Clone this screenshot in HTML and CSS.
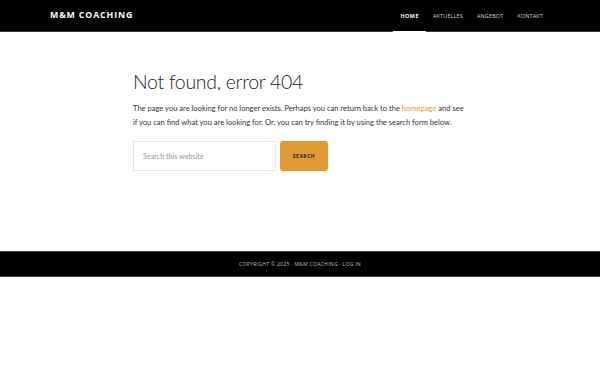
FILE: index.html
```html
<!DOCTYPE html>
<html lang="en">
<head>
<meta charset="utf-8">
<title>Not found, error 404 - M&amp;M Coaching</title>
<link rel="stylesheet" href="styles.css">
</head>
<body>
<header class="site-header">
  <div class="wrap header-wrap">
    <a class="logo" href="#">M&amp;M Coaching</a>
    <nav class="nav">
      <a class="nav-item active" href="#">Home</a>
      <a class="nav-item" href="#">Aktuelles</a>
      <a class="nav-item" href="#">Angebot</a>
      <a class="nav-item" href="#">Kontakt</a>
    </nav>
  </div>
</header>
<main class="content">
  <h1 class="title">Not found, error 404</h1>
  <p class="text">The page you are looking for no longer exists. Perhaps you can return back to the <a href="#">homepage</a> and see if you can find what you are looking for. Or, you can try finding it by using the search form below.</p>
  <form class="search">
    <input class="search-input" type="search" placeholder="Search this website">
    <button class="search-btn" type="button">Search</button>
  </form>
</main>
<footer class="site-footer">
  <p>Copyright &copy; 2025 &middot; M&amp;M Coaching &middot; Log in</p>
</footer>
</body>
</html>
```
FILE: styles.css
```css
* { box-sizing: border-box; }
html, body { margin: 0; padding: 0; background: #fff; }
body { font-family: Lato, "Open Sans", sans-serif; color: #333; }
a { text-decoration: none; }

.site-header {
  background: #000;
  height: 32px;
  border-bottom: 1px solid #3a3a3a;
}
.wrap { width: 500px; margin: 0 auto; }
.header-wrap {
  display: flex;
  justify-content: space-between;
  align-items: stretch;
  height: 31px;
}
.logo {
  color: #fff;
  font-family: "Open Sans", sans-serif;
  font-weight: 700;
  font-size: 8.8px;
  letter-spacing: 0.85px;
  text-transform: uppercase;
  display: flex;
  align-items: center;
  padding-bottom: 1px;
}
.nav { display: flex; align-items: stretch; }
.nav-item {
  color: #d8d8d8;
  font-family: "Open Sans", sans-serif;
  font-size: 5.4px;
  letter-spacing: 0.2px;
  text-transform: uppercase;
  padding: 0 7px;
  display: flex;
  align-items: center;
  position: relative;
}
.nav-item.active { color: #fff; font-weight: 700; letter-spacing: 0.5px; }
.nav-item.active::after {
  content: "";
  position: absolute;
  left: 0; right: 0; bottom: -2px;
  height: 2px;
  background: #fff;
}

.content {
  width: 338px;
  margin: 0 auto;
  padding: 38px 0 80px 2px;
}
.title {
  font-family: Lato, sans-serif;
  font-weight: 300;
  font-size: 19.5px;
  line-height: 24px;
  letter-spacing: -0.3px;
  color: #222;
  margin: 0 0 8px;
}
.text {
  font-size: 7.55px;
  line-height: 14px;
  color: #333;
  margin: 0 0 11px;
}
.text a { color: #e09b35; }
.search { display: flex; gap: 4px; }
.search-input {
  width: 143px;
  height: 30px;
  border: 1px solid #e6e6e6;
  padding: 0 9px;
  font-family: inherit;
  font-size: 7.2px;
  color: #333;
  outline: none;
}
.search-input::placeholder { color: #999; }
.search-btn {
  width: 48px;
  height: 30px;
  border: 0;
  border-radius: 3px;
  background: #e09b35;
  color: #222;
  font-family: "Open Sans", sans-serif;
  font-weight: 700;
  font-size: 5px;
  letter-spacing: 0.5px;
  text-transform: uppercase;
  padding: 0;
}

.site-footer {
  background: #000;
  border-top: 1px solid #444;
  border-bottom: 1px solid #444;
  height: 26px;
  display: flex;
  align-items: center;
  justify-content: center;
}
.site-footer p {
  margin: 0;
  color: #bdbdbd;
  font-family: "Open Sans", sans-serif;
  font-size: 5.2px;
  letter-spacing: 0.2px;
  text-transform: uppercase;
}
```
